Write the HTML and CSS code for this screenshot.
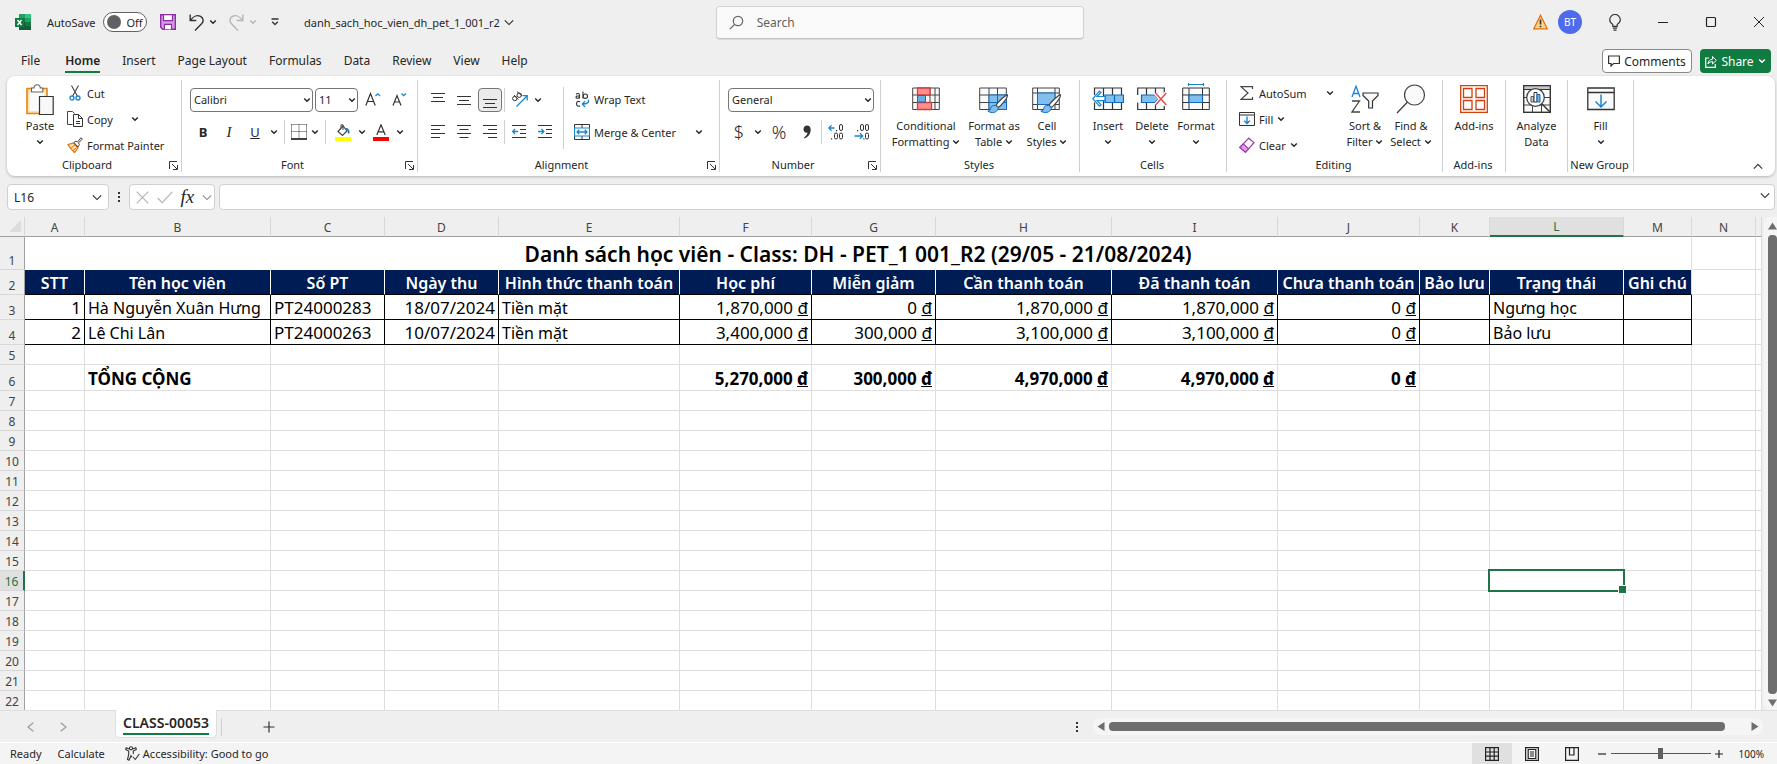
FILE: index.html
```html
<!DOCTYPE html>
<html lang="vi">
<head>
<meta charset="utf-8">
<title>danh_sach_hoc_vien_dh_pet_1_001_r2</title>
<link rel="stylesheet" href="styles.css">
</head>
<body>
<svg class="sprite" aria-hidden="true">
  <symbol id="chev" viewBox="0 0 8 8"><path d="M1.2 2.5 4 5.3 6.8 2.5" fill="none" stroke="currentColor" stroke-width="1.4"/></symbol>
  <symbol id="chev-lg" viewBox="0 0 12 8"><path d="M1 1.5 6 6.5 11 1.5" fill="none" stroke="currentColor" stroke-width="1.3"/></symbol>
  <symbol id="launch" viewBox="0 0 9 9"><path d="M.5 8V.5H8M3 3l5 5M8.5 4v4.5H4" fill="none" stroke="#333"/></symbol>
  <symbol id="dots" viewBox="0 0 4 14"><path d="M1 2h2v2H1zM1 6h2v2H1zM1 10h2v2H1z" fill="#333"/></symbol>
  <symbol id="brush" viewBox="0 0 22 20"><path d="M20.5 .8C18 1 10 9 9 11.5l2.5 2C14 11.5 21 4 20.5 .8z" fill="#fff" stroke="#444" stroke-width="1.2"/><path d="M8.5 11.5c-3-.5-4.500 1-4.800 3C3.500 16.500 2 17 .8 17c3 2.500 9.500 2.500 10.700-3.500z" fill="#83beec" stroke="#0f6cbd"/></symbol>
  <symbol id="fillbox" viewBox="0 0 28 24"><path d="M.8 1h26.400v21.500H.8zM.8 5.500h26.400" fill="#fafafa" stroke="#333" stroke-width="1.3"/><path d="M14 7.500v12M8.500 14.500 14 20l5.500-5.500" fill="none" stroke="#1a86d0" stroke-width="1.5"/></symbol>
</svg>

<header class="titlebar">
  <div class="title-left">
    <svg class="logo" viewBox="0 0 16 16"><path d="M4 0h12v16H4z" fill="#21a366"/><path d="M10 0h6v4h-6z" fill="#33c481"/><path d="M4 4h6v4H4z" fill="#107c41"/><path d="M4 8h12v8H4z" fill="#185c37"/><path d="M10 8h6v4h-6z" fill="#107c41"/><path d="M0 4h9v9H0z" fill="#107c41"/><path d="m2.500 6 4 5M6.500 6l-4 5" stroke="#fff" stroke-width="1.4"/></svg>
    <label class="autosave">AutoSave
      <span class="toggle"><input type="checkbox" aria-label="AutoSave"><span class="knob"></span>Off</span>
    </label>
    <button class="tb save" aria-label="Save"><svg width="16" height="16" viewBox="0 0 16 16"><path d="M.7.7h14.600v14.600H2.700l-2-2z" fill="#d59be0" stroke="#8a2da5" stroke-width="1.4"/><path d="M3.500.7h9v6h-9z" fill="#fff" stroke="#8a2da5" stroke-width="1.2"/><path d="M4.500 15.300v-5h7v5" fill="#fff" stroke="#8a2da5" stroke-width="1.2"/></svg></button>
    <button class="tb undo" aria-label="Undo"><svg width="15" height="17" viewBox="0 0 15 17"><path d="M1.200.5v6h6M1.500 6.300C4 2.500 8 .8 11.500 2.300c3 1.500 3.300 5 1.300 7.200L6 16.500" fill="none" stroke="#333" stroke-width="1.4"/></svg></button>
    <button class="tb arrow" aria-label="Undo list"><svg width="8" height="8"><use href="#chev"/></svg></button>
    <button class="tb undo dim" aria-label="Redo"><svg width="15" height="17" viewBox="0 0 15 17"><path d="M13.800.5v6h-6M13.500 6.300C11 2.500 7 .8 3.500 2.300.5 3.800.2 7.300 2.200 9.500L9 16.500" fill="none" stroke="currentColor" stroke-width="1.4"/></svg></button>
    <button class="tb arrow dim" aria-label="Redo list"><svg width="8" height="8"><use href="#chev"/></svg></button>
    <button class="tb custom" aria-label="Customize toolbar"><svg width="8" height="8" viewBox="0 0 8 8"><path d="M.5 1h7M1.200 3.800 4 6.500l2.800-2.700" fill="none" stroke="#333" stroke-width="1.3"/></svg></button>
    <button class="tb filename">danh_sach_hoc_vien_dh_pet_1_001_r2 <svg width="10" height="7"><use href="#chev-lg"/></svg></button>
  </div>
  <label class="search">
    <svg width="15" height="15" viewBox="0 0 15 15"><circle cx="9" cy="6" r="4.700" fill="none" stroke="#666" stroke-width="1.2"/><path d="M5.500 9.500.8 14.200" stroke="#666" stroke-width="1.2"/></svg>
    <input type="search" placeholder="Search" aria-label="Search">
  </label>
  <div class="title-right">
    <svg width="15" height="16" viewBox="0 0 15 16"><path d="M7.500 1.300 14.200 14.800H.8z" fill="#fbd48a" stroke="#e2710f" stroke-width="1.3"/><path d="M7.500 5.500v5M7.500 11.800v1.500" stroke="#333" stroke-width="1.6"/></svg>
    <button class="avatar">BT</button>
    <button class="tb bulb" aria-label="Tips"><svg width="12" height="17" viewBox="0 0 12 17"><path d="M3.800 12.300v-1.800C1.500 9 .7 7.500.7 5.800a5.300 5.300 0 0 1 10.600 0c0 1.700-.8 3.200-3.100 4.700v1.800zM3.800 14.200h4.400M4.500 16.200h3" fill="none" stroke="#333" stroke-width="1.2"/></svg></button>
    <button class="tb win" aria-label="Minimize"><svg width="12" height="12" viewBox="0 0 12 12"><path d="M1 6.500h10" stroke="#222"/></svg></button>
    <button class="tb win" aria-label="Maximize"><svg width="12" height="12" viewBox="0 0 12 12"><rect x="1.500" y="1.500" width="9" height="9" rx="1" fill="none" stroke="#222" stroke-width="1.2"/></svg></button>
    <button class="tb win" aria-label="Close"><svg width="12" height="12" viewBox="0 0 12 12"><path d="m1 1 10 10M11 1 1 11" stroke="#222"/></svg></button>
  </div>
</header>

<nav class="tabs">
  <button class="tab">File</button>
  <button class="tab active">Home</button>
  <button class="tab">Insert</button>
  <button class="tab">Page Layout</button>
  <button class="tab">Formulas</button>
  <button class="tab">Data</button>
  <button class="tab">Review</button>
  <button class="tab">View</button>
  <button class="tab">Help</button>
  <div class="tab-actions">
    <button class="comments"><svg width="12" height="12" viewBox="0 0 12 12"><path d="M.6 1h10.800v7.500H5.500L3 11V8.500H.6z" fill="none" stroke="#333" stroke-width="1.2"/></svg>Comments</button>
    <button class="share"><svg width="12" height="13" viewBox="0 0 12 13"><path d="M4 3H.7v9.300h9.600V9" fill="none" stroke="#fff" stroke-width="1.2"/><path d="M3 9c.3-3 2-4.700 4.500-4.800V1.500L11.300 5.300 7.500 9V6.600C5.500 6.600 4 7.500 3 9z" fill="none" stroke="#fff"/></svg>Share<svg width="8" height="8"><use href="#chev"/></svg></button>
  </div>
</nav>

<section class="ribbon">
  <div class="group g-clipboard">
    <div class="content">
      <button class="big paste"><span class="ico"><svg width="28" height="31" viewBox="0 0 28 31"><path d="M1 4.500h20v25H1z" fill="#fce3a8" stroke="#e2861c" stroke-width="1.6"/><path d="M3.500 7h15v20h-15z" fill="#fafafa"/><path d="M5.500 8V4H8c.3-4.300 6-4.300 6.300 0h2.500v4z" fill="#fff" stroke="#666" stroke-width="1.1"/><path d="M13.500 12.500h13.700v18H13.500z" fill="#f8f8f8" stroke="#333" stroke-width="1.2"/></svg></span>Paste<svg class="drop" width="8" height="8"><use href="#chev"/></svg></button>
      <div class="stack">
        <button class="small"><span class="si"><svg width="12" height="16" viewBox="0 0 12 16"><path d="M2.500.5 8.300 11M9.500.5 3.700 11" stroke="#444" stroke-width="1.1"/><circle cx="3" cy="13" r="2" fill="#fff" stroke="#1a86d0" stroke-width="1.3"/><circle cx="9" cy="13" r="2" fill="#fff" stroke="#1a86d0" stroke-width="1.3"/></svg></span>Cut</button>
        <button class="small"><span class="si"><svg width="16" height="16" viewBox="0 0 16 16"><path d="M5.500 13.500H.5V.5h5l2 2" fill="none" stroke="#444"/><path d="M6.500 3.500h5l4 4v8h-9z" fill="#fff" stroke="#333"/><path d="M11.500 3.500v4h4M9 10.500h4M9 12.500h4" fill="none" stroke="#333"/></svg></span>Copy<svg class="far" width="8" height="8"><use href="#chev"/></svg></button>
        <button class="small"><span class="si"><svg width="16" height="16" viewBox="0 0 16 16"><path d="M1 7.500 6.500 6l4.500 5-3.500 4.500C5 13 2.500 10.500 1 7.500z" fill="#fce3a8" stroke="#e2710f" stroke-width="1.2"/><path d="m4 11 4-3M6 13.500l3.500-3" stroke="#e2710f"/><path d="m7 5.500 2-1.500 1.500 1 3.500-4.300 1.300 1.300-3.800 4 .8 1.500L11 10z" fill="#fff" stroke="#444"/></svg></span>Format Painter</button>
      </div>
    </div>
    <div class="caption"><span>Clipboard</span><button class="tb" aria-label="Clipboard settings"><svg width="9" height="9"><use href="#launch"/></svg></button></div>
  </div>

  <div class="group g-font">
    <div class="content rows">
      <div class="row top">
        <span class="combo font-name"><select aria-label="Font"><option>Calibri</option></select><svg width="8" height="8"><use href="#chev"/></svg></span>
        <span class="combo font-size"><select aria-label="Font size"><option>11</option></select><svg width="8" height="8"><use href="#chev"/></svg></span>
        <button class="ib" aria-label="Increase font size"><svg width="16" height="15" viewBox="0 0 16 15"><path d="M.8 13.500 5.500 1.500l4.700 12M2.500 9.500h6" fill="none" stroke="#333" stroke-width="1.2"/><path d="m10.500 4 2.200-2.200L15 4" fill="none" stroke="#1a86d0" stroke-width="1.3"/></svg></button>
        <button class="ib" aria-label="Decrease font size"><svg width="16" height="15" viewBox="0 0 16 15"><path d="M2 13.500 6 3.500l4 10M3.500 10h5" fill="none" stroke="#333" stroke-width="1.2"/><path d="m10.500 1.500 2.200 2.200L15 1.500" fill="none" stroke="#1a86d0" stroke-width="1.3"/></svg></button>
      </div>
      <div class="row">
        <button class="ib bold">B</button><button class="ib italic">I</button><button class="ib under">U</button><button class="ch" aria-label="Underline options"><svg width="8" height="8"><use href="#chev"/></svg></button>
        <i class="sep"></i>
        <button class="ib narrow" aria-label="Borders"><svg width="16" height="16" viewBox="0 0 16 16"><path d="M.5.5v14M15.500.5v14M8 .5v14M.5.5h15M.5 7.500h15" fill="none" stroke="#333" stroke-dasharray="1 1"/><path d="M0 15h16" stroke="#111" stroke-width="1.6"/></svg></button><button class="ch" aria-label="Border options"><svg width="8" height="8"><use href="#chev"/></svg></button>
        <i class="sep"></i>
        <button class="ib" aria-label="Fill colour"><svg width="16" height="17" viewBox="0 0 16 17"><path d="M3 7.500 8 2l4 5-4.500 4.500z" fill="#fafafa" stroke="#444" stroke-width="1.2"/><path d="M6 4V.8h2V6" fill="none" stroke="#444"/><path d="M11 4.500c2 .5 3 2 2.600 5" fill="none" stroke="#1a75c0" stroke-width="1.8"/><path d="M0 13h16v4H0z" fill="#ff0"/></svg></button><button class="ch" aria-label="Fill colour options"><svg width="8" height="8"><use href="#chev"/></svg></button>
        <button class="ib" aria-label="Font colour"><svg width="16" height="17" viewBox="0 0 16 17"><path d="M3.800 11 8 .8 12.200 11M5.200 7.800h5.600" fill="none" stroke="#333" stroke-width="1.2"/><path d="M0 13h16v4H0z" fill="#f00"/></svg></button><button class="ch" aria-label="Font colour options"><svg width="8" height="8"><use href="#chev"/></svg></button>
      </div>
    </div>
    <div class="caption"><span>Font</span><button class="tb" aria-label="Font settings"><svg width="9" height="9"><use href="#launch"/></svg></button></div>
  </div>

  <div class="group g-align">
    <div class="content">
      <div class="rows align-left">
        <div class="row top">
          <button class="ib" aria-label="Top align"><svg width="14" height="16" viewBox="0 0 14 16"><path d="M0 1.500h14M2 5.500h10M0 9.500h14" stroke="#333"/></svg></button>
          <button class="ib" aria-label="Middle align"><svg width="14" height="16" viewBox="0 0 14 16"><path d="M0 4.500h14M2 8.500h10M0 12.500h14" stroke="#333"/></svg></button>
          <button class="ib pressed" aria-label="Bottom align"><svg width="14" height="16" viewBox="0 0 14 16"><path d="M0 7.500h14M2 11.500h10M0 15.500h14" stroke="#333"/></svg></button>
          <i class="sep tight"></i>
          <button class="ib" aria-label="Orientation"><svg width="17" height="17" viewBox="0 0 17 17"><g fill="none" stroke="#333"><circle cx="3.800" cy="7.500" r="2.200"/><path d="m3 4 4 4.500"/><circle cx="8.200" cy="4.200" r="2.200"/><path d="M6 .5 11 5"/></g><path d="M5.500 15.500 16 5M11.500 4.700h4.700v4.700" fill="none" stroke="#1a86d0" stroke-width="1.3"/></svg></button><button class="ch" aria-label="Orientation options"><svg width="8" height="8"><use href="#chev"/></svg></button>
        </div>
        <div class="row">
          <button class="ib" aria-label="Align left"><svg width="14" height="14" viewBox="0 0 14 14"><path d="M0 .5h14M0 4.500h9M0 8.500h14M0 12.500h9" stroke="#333"/></svg></button>
          <button class="ib" aria-label="Centre"><svg width="14" height="14" viewBox="0 0 14 14"><path d="M0 .5h14M2.500 4.500h9M0 8.500h14M2.500 12.500h9" stroke="#333"/></svg></button>
          <button class="ib" aria-label="Align right"><svg width="14" height="14" viewBox="0 0 14 14"><path d="M0 .5h14M5 4.500h9M0 8.500h14M5 12.500h9" stroke="#333"/></svg></button>
          <i class="sep tight"></i>
          <button class="ib" aria-label="Decrease indent"><svg width="14" height="14" viewBox="0 0 14 14"><path d="M0 .5h14M8 4.500h6M8 8.500h6M0 12.500h14" stroke="#333"/><path d="M6 6.500H.8M3 4 .6 6.500 3 9" fill="none" stroke="#1a86d0" stroke-width="1.3"/></svg></button>
          <button class="ib" aria-label="Increase indent"><svg width="14" height="14" viewBox="0 0 14 14"><path d="M0 .5h14M8 4.500h6M8 8.500h6M0 12.500h14" stroke="#333"/><path d="M0 6.500h5.500M3.500 4 5.900 6.500 3.500 9" fill="none" stroke="#1a86d0" stroke-width="1.3"/></svg></button>
        </div>
      </div>
      <i class="sep tall"></i>
      <div class="rows align-right">
        <button class="small row top"><span class="si"><svg width="16" height="17" viewBox="0 0 16 17"><g fill="none" stroke="#333" stroke-width="1.1"><path d="M2 3.200C3.500 2 5.500 2.300 5.500 4v3.500M5.500 4.800C3 4.800 2 5 2 6.200 2 7.800 5 7.500 5.500 6M9 .5v7"/><circle cx="11.300" cy="5.200" r="2.200"/><path d="M6 10.800c-1.500-1-3.500-.2-3.500 2s2 3 3.500 2"/></g><path d="M14.500 8.500c.5 3-1 4.500-6 4.500M11 10.200 8.300 13l2.700 3" fill="none" stroke="#1a86d0" stroke-width="1.3"/></svg></span>Wrap Text</button>
        <button class="small row"><span class="si"><svg width="16" height="16" viewBox="0 0 16 16"><path d="M.5.5h15v15H.5zM8 .5V4M8 12v3.500" fill="#fff" stroke="#333"/><path d="M.5 4h15v8H.5z" fill="#fff" stroke="#1a86d0" stroke-width="1.2"/><path d="M3 8h10M5.300 5.700 3 8l2.300 2.300M10.700 5.700 13 8l-2.300 2.300" fill="none" stroke="#1a86d0" stroke-width="1.3"/></svg></span>Merge &amp; Center<svg class="end" width="8" height="8"><use href="#chev"/></svg></button>
      </div>
    </div>
    <div class="caption"><span>Alignment</span><button class="tb" aria-label="Alignment settings"><svg width="9" height="9"><use href="#launch"/></svg></button></div>
  </div>

  <div class="group g-number">
    <div class="content rows">
      <div class="row top"><span class="combo number-format"><select aria-label="Number format"><option>General</option></select><svg width="8" height="8"><use href="#chev"/></svg></span></div>
      <div class="row">
        <button class="ib sign">$</button><button class="ch" aria-label="Currency options"><svg width="8" height="8"><use href="#chev"/></svg></button>
        <button class="ib wide-sign sign">%</button>
        <button class="ib" aria-label="Comma style"><svg width="8" height="14" viewBox="0 0 8 14"><path d="M4 .5c2.200 0 3.700 1.500 3.700 4C7.700 8.500 5.500 12 1.500 13.500L1 12.600c2-1.200 3.200-3 3.500-5C2.200 8.200.5 6.500.5 4.200.5 2 2 .5 4 .5z" fill="#333"/></svg></button>
        <i class="sep tight"></i>
        <button class="ib" aria-label="Increase decimal"><svg width="16" height="16" viewBox="0 0 16 16"><path d="M6.500 4H.8M3.500 1.300.8 4l2.700 2.700" fill="none" stroke="#1a86d0" stroke-width="1.3"/><g fill="none" stroke="#333"><rect x="11.500" y=".5" width="3" height="6" rx="1.500"/><rect x="6.500" y="9" width="3" height="6" rx="1.500"/><rect x="11.500" y="9" width="3" height="6" rx="1.500"/></g><path d="M8 6h1.200v1.200H8zM3 14.300h1.200v1.200H3z" fill="#333"/></svg></button>
        <button class="ib" aria-label="Decrease decimal"><svg width="16" height="16" viewBox="0 0 16 16"><path d="M.5 12h8M6 9.300 8.700 12 6 14.700" fill="none" stroke="#1a86d0" stroke-width="1.3"/><g fill="none" stroke="#333"><rect x="6.500" y=".5" width="3" height="6" rx="1.500"/><rect x="11.500" y=".5" width="3" height="6" rx="1.500"/><rect x="11.500" y="9" width="3" height="6" rx="1.500"/></g><path d="M3 6h1.200v1.200H3zM9.300 14.300h1.200v1.200H9.300z" fill="#333"/></svg></button>
      </div>
    </div>
    <div class="caption"><span>Number</span><button class="tb" aria-label="Number settings"><svg width="9" height="9"><use href="#launch"/></svg></button></div>
  </div>

  <div class="group g-styles">
    <div class="content">
      <button class="big w70"><span class="ico"><svg width="28" height="24" viewBox="0 0 28 24"><path d="M.7 1h26.600v21.500H.7zM.7 8h26.600M.7 15.500h26.600M5.500 1v21.500M18 1v21.500M23 1v21.500" fill="#fafafa" stroke="#444"/><path d="M5.500 1H18v7H5.500zM5.500 15.500h14v7h-14z" fill="#ff8f8f" stroke="#d83b3b" stroke-width="1.3"/><path d="M5.500 8.500h8v6.500h-8z" fill="#69afe5" stroke="#0f6cbd"/></svg></span>Conditional<span>Formatting <svg width="8" height="8"><use href="#chev"/></svg></span></button>
      <button class="big w66"><span class="ico"><svg width="30" height="28" viewBox="0 0 30 28"><path d="M.7 3h26.600v21.500H.7zM.7 10h26.600M.7 17.500h26.600M10 3v21.500M18.500 3v21.500" fill="#fafafa" stroke="#444"/><path d="M10 10h17.500v14.500H10zM18.500 10v14.500M10 17.500h17.500" fill="#83beec" stroke="#0f6cbd"/><use href="#brush" x="8" y="9" width="22" height="20"/></svg></span>Format as<span>Table <svg width="8" height="8"><use href="#chev"/></svg></span></button>
      <button class="big w40"><span class="ico"><svg width="30" height="28" viewBox="0 0 30 28"><path d="M.7 3h26.600v21.500H.7zM.7 8h26.600M.7 19.500h26.600M5.500 3v21.500M23 3v21.500" fill="#fafafa" stroke="#444"/><path d="M5.500 8H23v11.500H5.500z" fill="#83beec" stroke="#0f6cbd"/><use href="#brush" x="8" y="9" width="22" height="20"/></svg></span>Cell<span>Styles <svg width="8" height="8"><use href="#chev"/></svg></span></button>
    </div>
    <div class="caption"><span>Styles</span></div>
  </div>

  <div class="group g-cells">
    <div class="content">
      <button class="big w44"><span class="ico"><svg width="32" height="24" viewBox="0 0 32 24"><path d="M2.500 8V1h27v7M2.500 15.500v7h27v-7M11.500 1v21.500M20.500 1v21.500" fill="#fafafa" stroke="#333" stroke-width="1.2"/><path d="M13 8h18.500v7.500H13zM22.500 8v7.500" fill="#83beec" stroke="#0f6cbd" stroke-width="1.2"/><path d="M13 9.500H5l4-4-1.500-1.300L.8 11.700l6.700 7.500L9 17.700l-4-4h8z" fill="#fff" stroke="#1a86d0" stroke-width="1.2"/></svg></span>Insert<svg class="drop" width="8" height="8"><use href="#chev"/></svg></button>
      <button class="big w44"><span class="ico"><svg width="30" height="24" viewBox="0 0 30 24"><path d="M.7 8V1h26.600v7M.7 15.500v7h26.600v-4M9.500 1v21.500M18.500 1v21.500" fill="#fafafa" stroke="#333" stroke-width="1.2"/><path d="M4.500 8H18l4 3.700-4 3.800H4.500z" fill="#83beec" stroke="#0f6cbd" stroke-width="1.2"/><path d="m18.500 6 10.800 12M29.300 6 18.500 18" stroke="#fff" stroke-width="4"/><path d="m18.500 6 10.800 12M29.300 6 18.500 18" stroke="#e84a4a" stroke-width="1.4"/></svg></span>Delete<svg class="drop" width="8" height="8"><use href="#chev"/></svg></button>
      <button class="big w44"><span class="ico"><svg width="28" height="34" viewBox="0 0 28 34"><path d="M6.500 1v3M21.500 1v3M6.500 2.500h15" stroke="#1a86d0" stroke-width="1.2"/><path d="M.7 6h26.600v21.500H.7zM.7 13h26.600M.7 20.500h26.600M7 6v21.500M20.500 6v21.500" fill="#fafafa" stroke="#333"/><path d="M7 13h13.500v7.500H7z" fill="#83beec" stroke="#0f6cbd" stroke-width="1.2"/></svg></span>Format<svg class="drop" width="8" height="8"><use href="#chev"/></svg></button>
    </div>
    <div class="caption"><span>Cells</span></div>
  </div>

  <div class="group g-editing">
    <div class="content">
      <div class="stack">
        <button class="small"><span class="si"><svg width="14" height="14" viewBox="0 0 14 14"><path d="M12.500 3V.7H1L8 7l-7 6.300h11.500V11" fill="none" stroke="#444" stroke-width="1.2"/></svg></span>AutoSum<svg class="end" width="8" height="8"><use href="#chev"/></svg></button>
        <button class="small"><span class="si"><svg width="16" height="14" viewBox="0 0 16 14"><path d="M.5.5h15v13H.5zM.5 3h15" fill="#fafafa" stroke="#333"/><path d="M8 4.500v7M5.200 8.800 8 11.600l2.800-2.800" fill="none" stroke="#1a86d0" stroke-width="1.4"/></svg></span>Fill<svg width="8" height="8"><use href="#chev"/></svg></button>
        <button class="small"><span class="si"><svg width="16" height="16" viewBox="0 0 16 16"><path d="m.8 10.500 9-9.300 5.200 4.500-8.500 9.500z" fill="#fff" stroke="#a03aae" stroke-width="1.2"/><path d="m.8 10.500 3.500-3.700 5.300 5-3.100 3.400z" fill="#d9a0e0" stroke="#a03aae" stroke-width="1.2"/></svg></span>Clear<svg width="8" height="8"><use href="#chev"/></svg></button>
      </div>
      <button class="big w46"><span class="ico"><svg width="28" height="28" viewBox="0 0 28 28"><path d="M1 12 5 1.200 9 12M2.500 8.500h5" fill="none" stroke="#1a86d0" stroke-width="1.3"/><path d="M1 16h7.500L1 27h8" fill="none" stroke="#444" stroke-width="1.3"/><path d="M12 8h15v2.500L21.500 16v7h-3.800v-7L12 10.500z" fill="#fafafa" stroke="#333" stroke-width="1.2"/></svg></span>Sort &amp;<span>Filter <svg width="8" height="8"><use href="#chev"/></svg></span></button>
      <button class="big w46"><span class="ico"><svg width="30" height="30" viewBox="0 0 30 30"><circle cx="18.500" cy="11" r="10" fill="#fafafa" stroke="#444" stroke-width="1.2"/><path d="M11.500 18 1 29" stroke="#444" stroke-width="1.4"/></svg></span>Find &amp;<span>Select <svg width="8" height="8"><use href="#chev"/></svg></span></button>
    </div>
    <div class="caption"><span>Editing</span></div>
  </div>

  <div class="group g-addins">
    <div class="content">
      <button class="big wide"><span class="ico"><svg width="28" height="28" viewBox="0 0 28 28"><path d="M.7.7h26.600v26.600H.7zM3.500 3.500H12v9H3.500zM16 3.500h8.500v9H16zM3.500 15.500H12v9H3.500zM16 15.500h8.500v9H16z" fill="none" stroke="#d4400c" stroke-width="1.3"/></svg></span>Add-ins</button>
    </div>
    <div class="caption"><span>Add-ins</span></div>
  </div>
  <div class="group g-analyze">
    <div class="content">
      <button class="big wide"><span class="ico"><svg width="28" height="28" viewBox="0 0 28 28"><path d="M.7.7h26.600v26.600H.7zM.7 20h26.600M.7 12.500h26.600M9.500 4.500v23M18.500 4.500v23" fill="#fafafa" stroke="#444"/><path d="M1 1h26v3H1z" fill="#c8c6c4"/><path d="M.7 4.500h26.600M.7.7h26.600v26.600H.7z" fill="none" stroke="#333" stroke-width="1.2"/><circle cx="12.500" cy="12.500" r="8.800" fill="#fff" stroke="#444" stroke-width="1.3"/><path d="M19 19l8.500 8.500" stroke="#333" stroke-width="1.4"/><path d="M8 11.500h3V17H8z" fill="#ccc" stroke="#555"/><path d="M11 7.500h3V17h-3z" fill="#fff" stroke="#333"/><path d="M14 9.500h3V17h-3z" fill="#69afe5" stroke="#0f6cbd"/></svg></span>Analyze<span>Data</span></button>
    </div>
    <div class="caption"></div>
  </div>
  <div class="group g-new">
    <div class="content">
      <button class="big wide"><span class="ico"><svg width="28" height="24"><use href="#fillbox"/></svg></span>Fill<svg class="drop" width="8" height="8"><use href="#chev"/></svg></button>
    </div>
    <div class="caption"><span>New Group</span></div>
  </div>
  <button class="tb collapse" aria-label="Collapse ribbon"><svg width="10" height="7" viewBox="0 0 12 8"><path d="M1 6.500 6 1.500 11 6.500" fill="none" stroke="#333" stroke-width="1.4"/></svg></button>
</section>

<section class="formula">
  <div class="namebox"><input value="L16" aria-label="Name box"><svg width="10" height="7"><use href="#chev-lg"/></svg></div>
  <svg class="grip" width="4" height="14"><use href="#dots"/></svg>
  <div class="fxbox">
    <button class="tb" aria-label="Cancel"><svg width="13" height="13" viewBox="0 0 13 13"><path d="m.7.7 11.600 11.600M12.300.7.7 12.300" stroke="#b5b5b5" stroke-width="1.2"/></svg></button>
    <button class="tb" aria-label="Enter"><svg width="16" height="13" viewBox="0 0 16 13"><path d="m.7 7 4.500 4.700L15.300.9" fill="none" stroke="#b5b5b5" stroke-width="1.2"/></svg></button>
    <button class="tb fx">fx</button>
    <svg class="faint" width="10" height="7"><use href="#chev-lg"/></svg>
  </div>
  <div class="formulabox"><input aria-label="Formula bar"><svg width="10" height="7"><use href="#chev-lg"/></svg></div>
</section>

<main class="sheet">
  <table class="grid">
    <colgroup><col class="c0"><col class="cA"><col class="cB"><col class="cC"><col class="cD"><col class="cE"><col class="cF"><col class="cG"><col class="cH"><col class="cI"><col class="cJ"><col class="cK"><col class="cL"><col class="cM"><col class="cN"><col></colgroup>
    <thead><tr><th class="corner"><svg width="12" height="12" viewBox="0 0 12 12"><path d="M12 0v12H0z" fill="#dcdcdc"/></svg></th><th>A</th><th>B</th><th>C</th><th>D</th><th>E</th><th>F</th><th>G</th><th>H</th><th>I</th><th>J</th><th>K</th><th class="on">L</th><th>M</th><th>N</th><th></th></tr></thead>
    <tbody>
      <tr class="r-title"><th>1</th><td colspan="13" class="title">Danh sách học viên - Class: DH - PET_1 001_R2 (29/05 - 21/08/2024)</td><td></td><td></td></tr>
      <tr class="r-head"><th>2</th><td>STT</td><td>Tên học viên</td><td>Số PT</td><td>Ngày thu</td><td>Hình thức thanh toán</td><td>Học phí</td><td>Miễn giảm</td><td>Cần thanh toán</td><td>Đã thanh toán</td><td>Chưa thanh toán</td><td>Bảo lưu</td><td>Trạng thái</td><td>Ghi chú</td><td class="out"></td><td class="out"></td></tr>
      <tr class="r-data"><th>3</th><td class="num">1</td><td>Hà Nguyễn Xuân Hưng</td><td class="code">PT24000283</td><td class="num">18/07/2024</td><td>Tiền mặt</td><td class="num">1,870,000 <u>đ</u></td><td class="num">0 <u>đ</u></td><td class="num">1,870,000 <u>đ</u></td><td class="num">1,870,000 <u>đ</u></td><td class="num">0 <u>đ</u></td><td></td><td>Ngưng học</td><td></td><td class="out"></td><td class="out"></td></tr>
      <tr class="r-data"><th>4</th><td class="num">2</td><td>Lê Chi Lân</td><td class="code">PT24000263</td><td class="num">10/07/2024</td><td>Tiền mặt</td><td class="num">3,400,000 <u>đ</u></td><td class="num">300,000 <u>đ</u></td><td class="num">3,100,000 <u>đ</u></td><td class="num">3,100,000 <u>đ</u></td><td class="num">0 <u>đ</u></td><td></td><td>Bảo lưu</td><td></td><td class="out"></td><td class="out"></td></tr>
      <tr><th>5</th><td></td><td></td><td></td><td></td><td></td><td></td><td></td><td></td><td></td><td></td><td></td><td></td><td></td><td></td><td></td></tr>
      <tr class="r-total"><th>6</th><td></td><td>TỔNG CỘNG</td><td></td><td></td><td></td><td class="num">5,270,000 <u>đ</u></td><td class="num">300,000 <u>đ</u></td><td class="num">4,970,000 <u>đ</u></td><td class="num">4,970,000 <u>đ</u></td><td class="num">0 <u>đ</u></td><td></td><td></td><td></td><td></td><td></td></tr>
      <tr><th>7<td><td><td><td><td><td><td><td><td><td><td><td><td><td><td></tr>
      <tr><th>8<td><td><td><td><td><td><td><td><td><td><td><td><td><td><td></tr>
      <tr><th>9<td><td><td><td><td><td><td><td><td><td><td><td><td><td><td></tr>
      <tr><th>10<td><td><td><td><td><td><td><td><td><td><td><td><td><td><td></tr>
      <tr><th>11<td><td><td><td><td><td><td><td><td><td><td><td><td><td><td></tr>
      <tr><th>12<td><td><td><td><td><td><td><td><td><td><td><td><td><td><td></tr>
      <tr><th>13<td><td><td><td><td><td><td><td><td><td><td><td><td><td><td></tr>
      <tr><th>14<td><td><td><td><td><td><td><td><td><td><td><td><td><td><td></tr>
      <tr><th>15<td><td><td><td><td><td><td><td><td><td><td><td><td><td><td></tr>
      <tr><th class="on">16<td><td><td><td><td><td><td><td><td><td><td><td class="selected"><span class="cursor"></span><td><td><td></tr>
      <tr><th>17<td><td><td><td><td><td><td><td><td><td><td><td><td><td><td></tr>
      <tr><th>18<td><td><td><td><td><td><td><td><td><td><td><td><td><td><td></tr>
      <tr><th>19<td><td><td><td><td><td><td><td><td><td><td><td><td><td><td></tr>
      <tr><th>20<td><td><td><td><td><td><td><td><td><td><td><td><td><td><td></tr>
      <tr><th>21<td><td><td><td><td><td><td><td><td><td><td><td><td><td><td></tr>
      <tr><th>22<td><td><td><td><td><td><td><td><td><td><td><td><td><td><td></tr>
    </tbody>
  </table>
  <div class="vscroll">
    <svg width="9" height="8" viewBox="0 0 9 8"><path d="M4.500.5 9 7.500H0z" fill="#6e6e6e"/></svg>
    <span class="thumb"></span>
    <svg width="9" height="8" viewBox="0 0 9 8"><path d="M4.500 7.500 9 .5H0z" fill="#6e6e6e"/></svg>
  </div>
</main>

<footer class="sheetbar">
  <button class="tb nav" aria-label="Previous sheet"><svg width="7" height="10" viewBox="0 0 7 10"><path d="M6.300.8 1 5l5.300 4.200" fill="none" stroke="#a0a0a0" stroke-width="1.4"/></svg></button>
  <button class="tb nav" aria-label="Next sheet"><svg width="7" height="10" viewBox="0 0 7 10"><path d="M.7.8 6 5 .7 9.200" fill="none" stroke="#a0a0a0" stroke-width="1.4"/></svg></button>
  <button class="sheettab"><span>CLASS-00053</span></button>
  <i class="sep sheet-sep"></i>
  <button class="tb add" aria-label="New sheet"><svg width="12" height="12" viewBox="0 0 12 12"><path d="M6 .5v11M.5 6h11" stroke="#333" stroke-width="1.2"/></svg></button>
  <svg class="hgrip" width="4" height="14"><use href="#dots"/></svg>
  <div class="hscroll">
    <svg width="8" height="9" viewBox="0 0 8 9"><path d="M.5 4.500 7.500 0v9z" fill="#6e6e6e"/></svg>
    <span class="thumb"></span>
    <svg width="8" height="9" viewBox="0 0 8 9"><path d="M7.500 4.500.5 0v9z" fill="#6e6e6e"/></svg>
  </div>
</footer>

<div class="status">
  <span>Ready</span>
  <span>Calculate</span>
  <span class="a11y"><svg width="15" height="15" viewBox="0 0 15 15"><g fill="none" stroke="#333" stroke-width="1.1"><circle cx="6" cy="2.300" r="1.600"/><path d="M4.400 3 1.200 1.800.7 3.500l3 1.500v3.500L2.500 13.500l1.500.7 2-4.500 1 1.500M7.600 3l3.200-1.200.5 1.700-3 1.500v3"/><path d="m8 11 2.300 2.500 4-5.500"/></g></svg>Accessibility: Good to go</span>
  <div class="views">
    <button class="view on" aria-label="Normal"><svg width="14" height="14" viewBox="0 0 14 14"><path d="M.6.6h12.800v12.800H.6zM.6 5h12.800M.6 9.200h12.800M5 .6v12.800M9.200.6v12.800" fill="none" stroke="#222" stroke-width="1.2"/></svg></button>
    <button class="view" aria-label="Page layout"><svg width="14" height="14" viewBox="0 0 14 14"><path d="M.6.6h12.800v12.800H.6zM3.200 2.500h7.600v9H3.200zM5 5h4M5 7h4M5 9h4" fill="none" stroke="#222" stroke-width="1.2"/></svg></button>
    <button class="view" aria-label="Page break preview"><svg width="14" height="14" viewBox="0 0 14 14"><path d="M.6.6h12.800v12.800H.6zM4.500.6V8h4.500V.6" fill="none" stroke="#222" stroke-width="1.2"/></svg></button>
  </div>
  <button class="tb" aria-label="Zoom out"><svg width="8" height="8" viewBox="0 0 8 8"><path d="M0 4h8" stroke="#222" stroke-width="1.2"/></svg></button>
  <input class="zoom" type="range" min="0" max="100" value="50" aria-label="Zoom">
  <button class="tb" aria-label="Zoom in"><svg width="8" height="8" viewBox="0 0 8 8"><path d="M0 4h8M4 0v8" stroke="#222" stroke-width="1.2"/></svg></button>
  <span class="percent">100%</span>
</div>
</body>
</html>
```
FILE: styles.css
```css
* { box-sizing: border-box; }
body {
  margin: 0;
  height: 100vh;
  display: flex;
  flex-direction: column;
  overflow: hidden;
  background: #efefef;
  color: #262626;
  font-family: "Noto Sans", "Open Sans", sans-serif;
  font-size: 11px;
}
button, input, select { font: inherit; color: inherit; }
button { border: 0; background: none; padding: 0; white-space: nowrap; }
svg { display: block; flex: none; }
.sprite { display: none; }
.tb { display: flex; align-items: center; justify-content: center; }
.dim { color: #b5b5b5; }

/* Title bar */
.titlebar {
  display: grid;
  grid-template-columns: 51fr 368px 50fr;
  column-gap: 10px;
  align-items: center;
  height: 44px;
  flex: none;
  padding: 0 6px 5px 15px;
}
.title-left, .title-right { display: flex; align-items: center; height: 39px; padding-top: 5px; }
.title-right { justify-content: flex-end; }
.logo { width: 16px; height: 16px; margin-right: 16px; }
.autosave { display: flex; align-items: center; gap: 8px; width: 100px; justify-content: space-between; white-space: nowrap; }
.toggle {
  display: flex; align-items: center; gap: 5px;
  width: 45px; height: 20px; padding-left: 3px;
  border: 1px solid #616161; border-radius: 10px; background: #fff;
}
.toggle input { position: absolute; opacity: 0; width: 1px; height: 1px; margin: 0; }
.knob { width: 14px; height: 14px; border-radius: 50%; background: #616161; }
.save { margin-left: 13px; }
.undo { margin-left: 13px; }
.arrow { margin-left: 5px; }
.arrow + .undo { margin-left: 12px; }
.custom { margin: 0 25px 0 14px; }
.filename { gap: 4px; }
.search {
  display: flex; align-items: center; gap: 13px;
  height: 33px; margin-top: 6px; padding: 0 12px;
  border: 1px solid #d2d2d2; border-bottom-color: #c4c4c4; border-radius: 4px; background: #fafafa;
  box-shadow: 0 1px 1px #00000018;
  font-size: 12px;
}
.search input { flex: 1; border: 0; outline: 0; padding: 0; background: none; }
.search input::placeholder { color: #616161; opacity: 1; }
.avatar {
  width: 24px; height: 24px; margin: 0 27px 0 10px;
  border-radius: 50%; background: #4f6bed; color: #fff; font-size: 10px;
}
.bulb { margin-right: 18px; }
.win { width: 24px; margin-left: 12px; }
.win + .win { margin-left: 24px; }

/* Ribbon tabs */
.tabs { display: flex; align-items: flex-start; gap: 22px; height: 32px; flex: none; padding: 5px 6px 0 21px; font-size: 12px; }
.tab { height: 24px; padding-top: 2px; border-bottom: 2px solid transparent; line-height: 20px; }
.tab:first-child { margin-right: 3px; }
.tab.active { font-weight: 600; border-color: #107c41; }
.tab-actions { display: flex; gap: 8px; margin-left: auto; }
.comments, .share { display: flex; align-items: center; justify-content: center; height: 24px; border-radius: 4px; }
.comments { width: 90px; gap: 4px; border: 1px solid #8a8a8a; background: #fff; }
.share { width: 71px; gap: 4px; background: #107c41; color: #fff; }

/* Ribbon */
.ribbon {
  display: flex; flex: none;
  height: 100px; margin: 0 2px 0 7px; padding: 4px 0;
  background: #fff; border-radius: 8px;
  box-shadow: 0 1px 3px #00000040;
}
.group { display: flex; flex-direction: column; flex: none; border-right: 1px solid #cfcfcf; }
.content { display: flex; flex: 1; }
.caption { display: flex; align-items: center; height: 14px; padding-right: 2px; line-height: 14px; white-space: nowrap; }
.caption span { flex: 1; text-align: center; }
.caption .tb { width: 12px; }
.g-clipboard { width: 175px; }
.g-font { width: 236px; }
.g-align { width: 302px; }
.g-number { width: 161px; }
.g-styles { width: 199px; }
.g-cells { width: 147px; }
.g-editing { width: 216px; }
.g-addins { width: 63px; }
.g-analyze { width: 62px; }
.g-new { width: 66px; }
.g-font .content { padding-left: 8px; }
.g-align .content { padding-left: 7px; }
.g-number .content { padding-left: 6px; }
.g-styles .content { padding-left: 10px; }
.g-cells .content { padding-left: 6px; }
.g-editing .content { padding-left: 12px; }

.big { display: flex; flex-direction: column; align-items: center; line-height: 16px; height: 74px; }
.big .ico { display: flex; align-items: center; justify-content: center; height: 38px; }
.big span svg { display: inline-block; }
.drop { margin-top: 4px; }
.paste { width: 52px; margin-left: 7px; }
.w40 { width: 40px; }
.w44 { width: 44px; }
.w46 { width: 46px; }
.w66 { width: 66px; }
.w70 { width: 70px; }
.wide { width: 100%; }
.stack { display: flex; flex-direction: column; flex: none; }
.g-clipboard .stack { margin-left: 1px; }
.g-editing .stack { width: 103px; }
.stack .small { height: 26px; }
.small { display: flex; align-items: center; gap: 4px; }
.si { display: flex; justify-content: center; width: 16px; }
.far { margin-left: 14px; }
.end { margin-left: auto; margin-right: 8px; }
.align-right .end { margin-right: 16px; }

.rows { display: flex; flex-direction: column; }
.row { display: flex; align-items: center; height: 26px; }
.row.top { height: 39px; }
.ib { display: flex; align-items: center; justify-content: center; width: 26px; height: 24px; font-size: 13px; }
.ib.narrow { width: 20px; }
.ch { display: flex; align-items: center; justify-content: center; width: 12px; }
.pressed { border: 1px solid #767676; border-radius: 4px; background: #ebebeb; width: 24px; margin: 0 1px; }
.bold { font-weight: 700; }
.italic { font-family: "Liberation Serif", serif; font-style: italic; font-size: 15px; }
.under { text-decoration: underline; }
.sign { font-size: 18px; font-weight: 300; }
.ib.wide-sign { width: 30px; }
.sep { flex: none; width: 1px; height: 24px; margin: 0 4px; background: #cfcfcf; }
.sep.tight { margin: 0 1px; }
.sep.tall { height: 62px; margin: 7px 10px 0 0; }
.align-left { width: 138px; }
.align-right { flex: 1; }
.combo { position: relative; display: block; height: 24px; font-size: 11px; }
.combo select {
  width: 100%; height: 100%; padding: 0 16px 0 3px;
  appearance: none; border: 1px solid #767676; border-radius: 4px; background: #fff;
}
.combo svg { position: absolute; right: 2px; top: 8px; pointer-events: none; }
.font-name { width: 123px; margin-right: 2px; }
.font-size { width: 43px; margin-right: 2px; }
.number-format { width: 146px; margin-left: 2px; }
.collapse { align-self: flex-end; margin: 0 12px 2px auto; }

/* Formula bar */
.formula { display: flex; align-items: center; flex: none; height: 41px; padding: 8px 2px 7px 7px; font-size: 12px; }
.namebox, .fxbox, .formulabox { display: flex; align-items: center; height: 26px; border: 1px solid #d0d0d0; border-radius: 4px; background: #fff; }
.namebox { width: 102px; padding: 0 6px; }
.formula input { flex: 1; min-width: 0; border: 0; outline: 0; padding: 0; background: none; }
.grip { margin: 0 8px; }
.fxbox { width: 86px; justify-content: space-between; padding: 0 2px 0 6px; }
.fx { font-family: "Liberation Serif", serif; font-style: italic; font-size: 19px; }
.faint { color: #8a8a8a; }
.formulabox { flex: 1; margin-left: 4px; padding: 0 4px; }
.formulabox svg { margin-bottom: 4px; }

/* Worksheet */
.sheet { display: flex; flex: 1; min-height: 0; overflow: hidden; }
.grid {
  flex: 1; width: 0; align-self: flex-start;
  table-layout: fixed; border-collapse: separate; border-spacing: 0;
  background: #fff; color: #000; font-size: 16px;
}
.c0 { width: 25px; }
.cA { width: 60px; }
.cB { width: 186px; }
.cC, .cD { width: 114px; }
.cE { width: 181px; }
.cF { width: 132px; }
.cG { width: 124px; }
.cH { width: 176px; }
.cI { width: 166px; }
.cJ { width: 142px; }
.cK { width: 70px; }
.cL { width: 134px; }
.cM { width: 68px; }
.cN { width: 64px; }
.grid tr { height: 20px; }
.grid th {
  padding: 0; height: 20px; line-height: 16px; overflow: hidden; vertical-align: bottom;
  background: #efefef; color: #444; font-weight: 400; font-size: 12px;
}
.grid thead th { border-right: 1px solid #d8d8d8; border-bottom: 1px solid #a0a0a0; }
.grid tbody th { border-right: 1px solid #a0a0a0; border-bottom: 1px solid #d8d8d8; }
.grid thead th.on { background: #e0e0e0; color: #217346; border-bottom: 2px solid #217346; }
.grid tbody th.on { background: #e0e0e0; color: #217346; border-right: 2px solid #217346; }
.corner svg { margin: 0 0 4px 9px; }
.grid td {
  padding: 0 3px; white-space: nowrap; line-height: 22px; vertical-align: bottom;
  border-right: 1px solid #dedede; border-bottom: 1px solid #dedede;
}
.grid .r-title { height: 33px; }
.grid .title { border-bottom-color: #fff; text-align: center; font-weight: 600; font-size: 21px; line-height: 30px; }
.grid .r-head, .grid .r-data { height: 25px; }
.r-head td { background: #001c54; color: #fff; text-align: center; font-weight: 600; border-color: #fff #fff #000; }
.r-data td { border-color: #000; }
.r-head td.out, .r-data td.out { background: #fff; border-color: #dedede; }
.r-head td:nth-child(14) { border-right-color: #dedede; }
.grid .r-total { height: 26px; font-weight: 700; font-size: 17px; }
.grid td.num { text-align: right; font-size: 17px; }
.grid td.code { font-size: 17px; }
.selected { position: relative; }
.cursor { position: absolute; inset: -2px; border: 2px solid #217346; z-index: 1; }
.cursor::after {
  content: ""; position: absolute; right: -4px; bottom: -4px;
  width: 7px; height: 7px; background: #217346; border: 1px solid #fff;
}
.vscroll {
  display: flex; flex-direction: column; align-items: flex-end; gap: 5px;
  width: 13px; margin-left: 2px; padding: 5px 0 3px;
  background: #f5f5f5; border-radius: 6px 0 0 6px;
}
.thumb { flex: 1; background: #6e6e6e; border-radius: 4px; }
.vscroll .thumb { width: 9px; }

/* Sheet tabs */
.sheetbar { display: flex; align-items: center; flex: none; height: 32px; padding-right: 14px; border-top: 1px solid #dedede; }
.nav { width: 33px; }
.nav:first-child { margin-left: 14px; }
.sheettab {
  align-self: flex-start; width: 102px; height: 28px; margin: -1px 4px 0 35px;
  background: #fff; border: 1px solid #dedede; border-top: 0; border-radius: 0 0 5px 5px;
  font-size: 14px; font-weight: 600;
}
.sheettab span { display: inline-block; border-bottom: 2px solid #107c41; line-height: 20px; }
.sheet-sep { height: 18px; margin: 0; }
.add { margin-left: 41px; }
.hgrip { margin-left: auto; margin-right: 14px; }
.hscroll {
  display: flex; align-items: center; gap: 4px;
  width: 38%; height: 17px; padding: 0 4px;
  background: #f5f5f5; border-radius: 8px;
}
.hscroll .thumb { height: 9px; margin-right: 22px; }

/* Status bar */
.status { display: flex; align-items: center; flex: none; height: 22px; padding: 0 13px 0 10px; border-top: 1px solid #fff; background: #f4f4f4; white-space: nowrap; }
.status span { margin-right: 16px; }
.status .a11y { display: flex; align-items: center; gap: 3px; margin-left: 4px; }
.views { display: flex; margin-left: auto; margin-right: 6px; height: 100%; }
.view { display: flex; align-items: center; justify-content: center; width: 40px; height: 21px; }
.view.on { background: #e0e0e0; }
.zoom { appearance: none; width: 100px; height: 20px; margin: 0 4px 0 5px; background: none; }
.zoom::-webkit-slider-runnable-track { height: 1px; background: #555; }
.zoom::-webkit-slider-thumb { appearance: none; width: 5px; height: 11px; margin-top: -5px; background: #616161; }
.status .percent { margin: 0 0 0 16px; font-size: 10px; }
```
